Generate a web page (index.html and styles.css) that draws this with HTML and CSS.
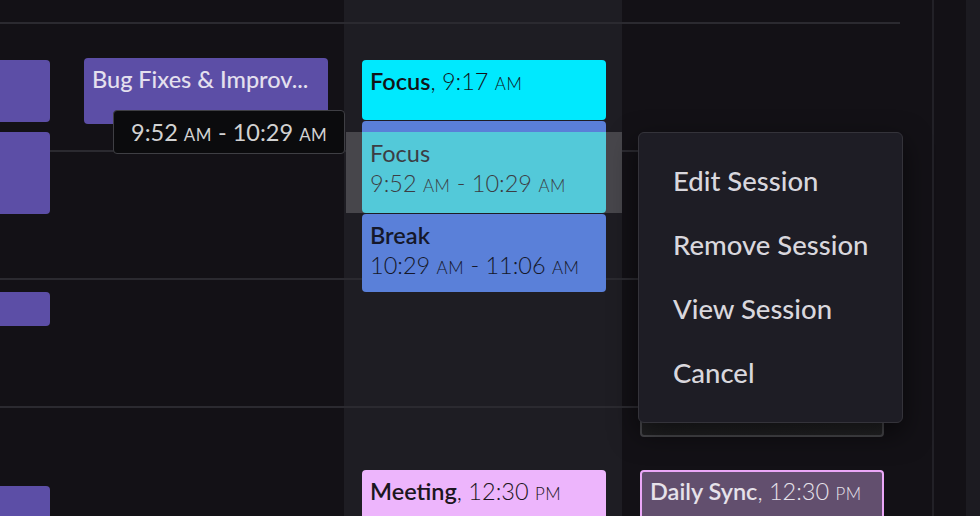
FILE: index.html
```html
<!DOCTYPE html>
<html lang="en">
<head>
<meta charset="utf-8">
<title>Calendar</title>
<link rel="stylesheet" href="styles.css">
</head>
<body>
<div class="app">
  <div class="calendar">
    <div class="columns">
      <div class="day">
        <div class="event purple" style="top:60px;height:62px"></div>
        <div class="event purple" style="top:132px;height:82px"></div>
        <div class="event purple" style="top:292px;height:34px"></div>
        <div class="event purple" style="top:486px;height:60px"></div>
      </div>
      <div class="day">
        <div class="event purple" style="top:58px;height:66px">
          <div class="line"><span class="title-reg">Bug Fixes &amp; Improv...</span></div>
        </div>
      </div>
      <div class="day today">
        <div class="event cyan" style="top:60px;height:60px">
          <div class="line"><span class="title">Focus</span><span class="time">, 9:17 <span class="sc">AM</span></span></div>
        </div>
        <div class="event bluebar" style="top:121px;height:20px"></div>
        <div class="drop-highlight" style="top:132px;height:81px"></div>
        <div class="event teal" style="top:132px;height:81px">
          <div class="line"><span class="title-reg">Focus</span></div>
          <div class="line"><span class="time">9:52 <span class="sc">AM</span> - 10:29 <span class="sc">AM</span></span></div>
        </div>
        <div class="event blue" style="top:214px;height:78px">
          <div class="line"><span class="title">Break</span></div>
          <div class="line"><span class="time">10:29 <span class="sc">AM</span> - 11:06 <span class="sc">AM</span></span></div>
        </div>
        <div class="event pink" style="top:470px;height:80px">
          <div class="line"><span class="title">Meeting</span><span class="time">, 12:30 <span class="sc">PM</span></span></div>
        </div>
      </div>
      <div class="day">
        <div class="event ghost" style="top:360px;height:77px"></div>
        <div class="event sync" style="top:470px;height:80px">
          <div class="line"><span class="title">Daily Sync</span><span class="time">, 12:30 <span class="sc">PM</span></span></div>
        </div>
      </div>
    </div>

    <div class="tooltip">9:52 <span class="sc">AM</span> - 10:29 <span class="sc">AM</span></div>

    <ul class="menu">
      <li>Edit Session</li>
      <li>Remove Session</li>
      <li>View Session</li>
      <li>Cancel</li>
    </ul>
  </div>
  <div class="gutter"></div>
  <div class="divider"></div>
  <div class="side"></div>
  <div class="scrollbar"></div>
</div>
</body>
</html>
```

FILE: styles.css
```css
* { box-sizing: border-box; }

html, body {
  margin: 0;
  padding: 0;
  background: #131116;
  overflow: hidden;
}

body {
  font-family: "Lato", "Noto Sans", sans-serif;
  width: 980px;
  height: 516px;
}

.app {
  display: flex;
  width: 980px;
  height: 516px;
}

.calendar {
  position: relative;
  width: 900px;
  height: 516px;
  flex: none;
}

.columns {
  display: flex;
  margin-left: -212px;
  height: 516px;
  overflow: hidden;
  width: 1112px;
}

.day {
  position: relative;
  flex: none;
  width: 278px;
  height: 516px;
  background: repeating-linear-gradient(to bottom,
    transparent 0, transparent 22px,
    #2b2a30 22px, #2b2a30 24px,
    transparent 24px, transparent 128px);
}

.day.today {
  background-color: #1e1d23;
}

.event {
  position: absolute;
  left: 18px;
  right: 16px;
  border-radius: 4px;
  padding: 6px 8px 0;
  overflow: hidden;
}

.line {
  height: 30px;
  line-height: 30px;
  font-size: 23.5px;
  white-space: nowrap;
}

.title { font-weight: 600; }
.title-reg { font-weight: 500; }
.time { font-weight: 300; }
.sc { font-size: 0.72em; letter-spacing: 0.03em; }

.purple {
  background: #5c4ea6;
  color: #e4e0ee;
}

.cyan {
  background: #00e9fe;
  color: #121419;
}

.bluebar {
  background: #5a7fd8;
  z-index: 1;
}

.drop-highlight {
  position: absolute;
  left: 2px;
  right: 0;
  background: #47464b;
  z-index: 2;
}

.teal {
  background: #53c9d9;
  color: #3c3d44;
  border-radius: 0 0 4px 4px;
  z-index: 3;
}

.teal .title-reg { font-weight: 400; }

.blue {
  background: #5a80d9;
  color: #15182a;
  z-index: 3;
}

.pink {
  background: #edb5fc;
  color: #1c1620;
}

.ghost {
  background: linear-gradient(160deg, #1d1d1f, #242426);
  border: 2px solid #48484c;
}

.sync {
  background: #624f6e;
  border: 2px solid #eba7f8;
  color: #e6e2ea;
  padding: 4px 8px 0;
}

.tooltip {
  position: absolute;
  left: 113px;
  top: 110px;
  width: 232px;
  height: 44px;
  background: #0b0b0d;
  border: 1px solid #3f3f44;
  border-radius: 4px;
  color: #d2d2d2;
  font-size: 23.5px;
  line-height: 42px;
  padding-left: 17px;
  white-space: nowrap;
  z-index: 10;
}

.menu {
  position: absolute;
  left: 638px;
  top: 132px;
  width: 265px;
  height: 291px;
  margin: 0;
  padding: 16px 0 0 0;
  list-style: none;
  background: #1e1d25;
  border: 1px solid #34333a;
  border-radius: 6px;
  box-shadow: 0 10px 28px rgba(0, 0, 0, 0.55);
  z-index: 10;
}

.menu li {
  height: 64px;
  line-height: 64px;
  padding-left: 34px;
  font-size: 27.5px;
  font-weight: 500;
  color: #d9d7dd;
}

.gutter {
  width: 32px;
  flex: none;
}

.divider {
  width: 2px;
  flex: none;
  background: #222127;
}

.side {
  width: 32px;
  flex: none;
}

.scrollbar {
  width: 14px;
  flex: none;
  background: #1c1b21;
}
```
